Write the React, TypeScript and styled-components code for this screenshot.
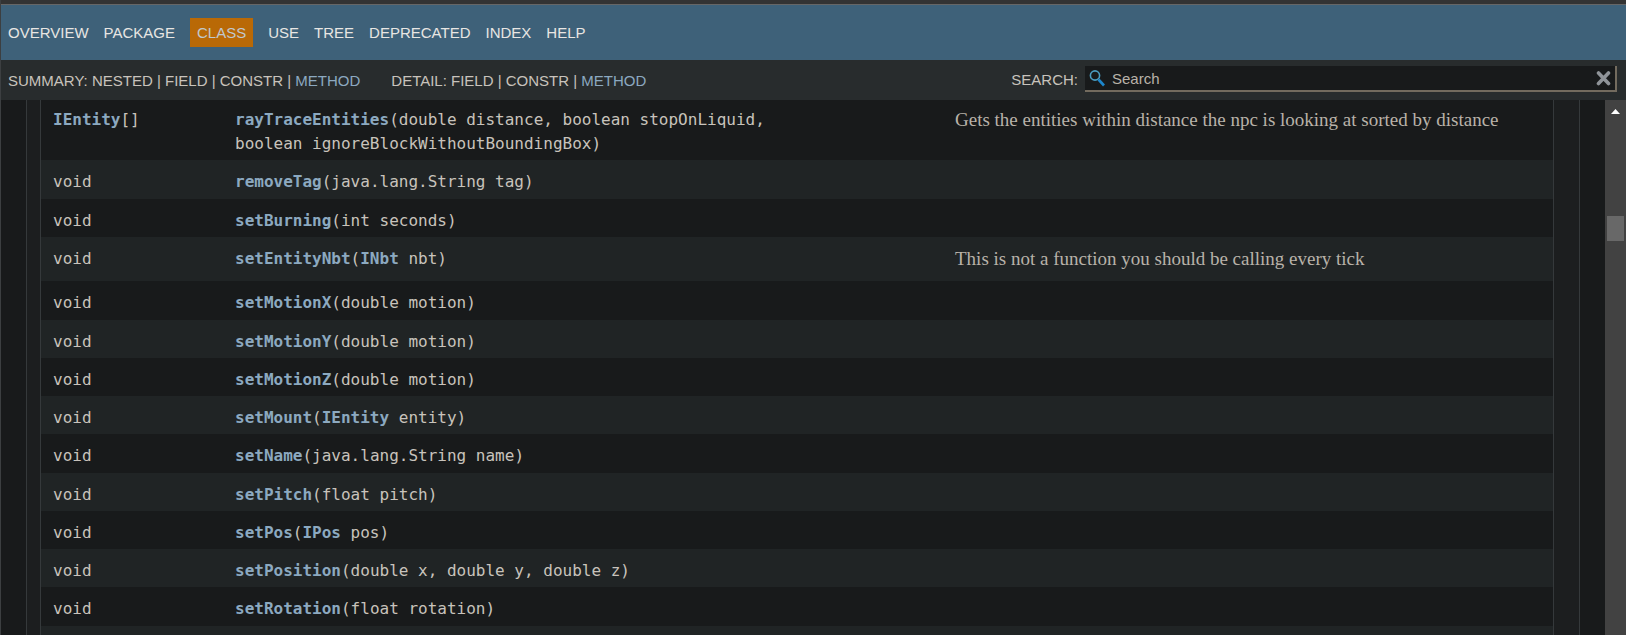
import React from "react";
import styled, { createGlobalStyle } from "styled-components";

const GlobalStyle = createGlobalStyle`
  * { box-sizing: border-box; }
  html, body, #root { height: 100%; }
  body {
    margin: 0;
    overflow: hidden;
    background: #181a1b;
    color: #c8c3bc;
    font-family: "Liberation Sans", Arial, sans-serif;
  }
  a { color: #8ca9c0; text-decoration: none; }
`;

const Page = styled.div`
  height: 100vh;
  display: flex;
  flex-direction: column;
  border-left: 1px solid #3c3f41;
`;

const TopStrip = styled.div`
  flex: none;
  height: 5px;
  background: #333333;
  border-bottom: 1px solid #666666;
`;

const TopNav = styled.nav`
  flex: none;
  height: 55px;
  background: #3e6179;
  display: flex;
  align-items: center;
  padding: 0 7px;
`;

const NavList = styled.ul`
  display: flex;
  align-items: center;
  gap: 15px;
  margin: 0;
  padding: 0;
  list-style: none;
  font-size: 15px;
  line-height: 17px;
`;

const NavItem = styled.li<{ $active?: boolean }>`
  padding: ${(p) => (p.$active ? "6px 7px" : "0")};
  background: ${(p) => (p.$active ? "#b96906" : "transparent")};
  color: #c1c8cd;
  a { color: #e8e6e3; }
`;

const SubNav = styled.div`
  flex: none;
  height: 40px;
  background: #282c2d;
  display: flex;
  align-items: center;
  padding: 0 9px 0 7px;
  gap: 31px;
  font-size: 15px;
  line-height: 17px;
`;

const SubList = styled.div`
  white-space: pre;
`;

const SearchForm = styled.form`
  margin: 0 0 2px auto;
  display: flex;
  align-items: center;
  gap: 7px;
`;

const SearchBox = styled.div`
  display: flex;
  align-items: center;
  width: 532px;
  height: 26px;
  padding: 0 3px 0 4px;
  background: #181a1b;
  border: 0 solid #736b5e;
  border-width: 0 2px 2px 0;
`;

const SearchInput = styled.input`
  flex: 1;
  min-width: 0;
  margin: 0;
  padding: 0 0 0 6px;
  border: 0;
  outline: 0;
  background: transparent;
  color: #c8c3bc;
  font: 15px/17px "Liberation Sans", Arial, sans-serif;
  &::placeholder { color: #b8b2a9; opacity: 1; }
`;

const ClearButton = styled.button`
  display: flex;
  padding: 0;
  border: 0;
  background: transparent;
`;

const Body = styled.div`
  flex: 1;
  min-height: 0;
  display: flex;
`;

const Content = styled.main`
  flex: 1;
  min-width: 0;
  overflow: hidden;
  padding: 0 25px;
`;

const Outer = styled.div`
  border: 0 solid #35393b;
  border-width: 0 1px;
  background: #1c1e1f;
  padding: 0 25px 0 13px;
`;

const Table = styled.table`
  width: 100%;
  border-collapse: separate;
  border-spacing: 0;
  table-layout: fixed;
  border: 0 solid #35393b;
  border-width: 0 1px;
`;

const Row = styled.tr`
  height: 38px;
  background: #181a1b;
  &:nth-child(even) { background: #202425; }
  &:nth-child(2), &:nth-child(4n + 5) { height: 39px; }
`;

const Cell = styled.td`
  padding: 10px 12px 4px;
  vertical-align: top;
  font: 16px/24px "DejaVu Sans Mono", monospace;
  ${Row}:first-child & { padding: 8px 12px 4px; }
  a { font-weight: bold; }
`;

const TypeCol = styled.col`
  width: 182px;
`;

const NoteCol = styled.col`
  width: 610px;
`;

const NoteCell = styled(Cell)`
  font-family: "Liberation Serif", serif;
  font-size: 19px;
  color: #b8b2a9;
`;

const Note = styled.p`
  margin: 0 0 6px;
`;

const Scrollbar = styled.div`
  flex: none;
  width: 21px;
  padding: 8px 2px 0;
  background: #424242;
  display: flex;
  flex-direction: column;
  align-items: center;
`;

const Thumb = styled.div`
  width: 17px;
  height: 25px;
  margin-top: 101px;
  background: #686868;
`;

const NAV = ["OVERVIEW", "PACKAGE", "CLASS", "USE", "TREE", "DEPRECATED", "INDEX", "HELP"];

type Method = { type?: React.ReactNode; name: string; args: React.ReactNode; note?: string };

const METHODS: Method[] = [
  {
    type: <><a href="#IEntity">IEntity</a>[]</>,
    name: "rayTraceEntities",
    args: <>double distance, boolean stopOnLiquid,<br />boolean ignoreBlockWithoutBoundingBox</>,
    note: "Gets the entities within distance the npc is looking at sorted by distance",
  },
  { name: "removeTag", args: "java.lang.String tag" },
  { name: "setBurning", args: "int seconds" },
  {
    name: "setEntityNbt",
    args: <><a href="#INbt">INbt</a> nbt</>,
    note: "This is not a function you should be calling every tick",
  },
  { name: "setMotionX", args: "double motion" },
  { name: "setMotionY", args: "double motion" },
  { name: "setMotionZ", args: "double motion" },
  { name: "setMount", args: <><a href="#IEntity">IEntity</a> entity</> },
  { name: "setName", args: "java.lang.String name" },
  { name: "setPitch", args: "float pitch" },
  { name: "setPos", args: <><a href="#IPos">IPos</a> pos</> },
  { name: "setPosition", args: "double x, double y, double z" },
  { name: "setRotation", args: "float rotation" },
];

export default function App() {
  return (
    <Page>
      <GlobalStyle />
      <TopStrip />
      <TopNav>
        <NavList>
          {NAV.map((n) => (
            <NavItem key={n} $active={n === "CLASS"}>
              {n === "CLASS" ? n : <a href={`#${n.toLowerCase()}`}>{n}</a>}
            </NavItem>
          ))}
        </NavList>
      </TopNav>
      <SubNav>
        <SubList>SUMMARY: NESTED | FIELD | CONSTR | <a href="#method-summary">METHOD</a></SubList>
        <SubList>DETAIL: FIELD | CONSTR | <a href="#method-detail">METHOD</a></SubList>
        <SearchForm>
          <label htmlFor="search">SEARCH:</label>
          <SearchBox>
            <svg width="17" height="18" viewBox="0 0 17 18" fill="none">
              <circle cx="6" cy="6.500" r="4.600" stroke="#4a9cc0" strokeWidth="1.600" />
              <path d="M9.500 10.500 L15 16.500" stroke="#1c86cc" strokeWidth="2.600" />
            </svg>
            <SearchInput id="search" type="text" placeholder="Search" />
            <ClearButton type="reset" aria-label="Clear">
              <svg width="16" height="16" viewBox="0 0 16 16">
                <path d="M2.500 3 L12.500 13.500 M12.500 3 L2.500 13.500" stroke="#8f9499" strokeWidth="3.600" strokeLinecap="round" />
              </svg>
            </ClearButton>
          </SearchBox>
        </SearchForm>
      </SubNav>
      <Body>
        <Content>
          <Outer>
            <Table>
              <colgroup>
                <TypeCol />
                <col />
                <NoteCol />
              </colgroup>
              <tbody>
                {METHODS.map((m) => (
                  <Row key={m.name}>
                    <Cell>{m.type ?? "void"}</Cell>
                    <Cell><a href={`#${m.name}`}>{m.name}</a>({m.args})</Cell>
                    <NoteCell>{m.note && <Note>{m.note}</Note>}</NoteCell>
                  </Row>
                ))}
                <Row>
                  <Cell colSpan={3} />
                </Row>
              </tbody>
            </Table>
          </Outer>
        </Content>
        <Scrollbar>
          <svg width="9" height="7" viewBox="0 0 9 7">
            <path d="M4.500 1 L9 6 H0 Z" fill="#ffffff" />
          </svg>
          <Thumb />
        </Scrollbar>
      </Body>
    </Page>
  );
}
